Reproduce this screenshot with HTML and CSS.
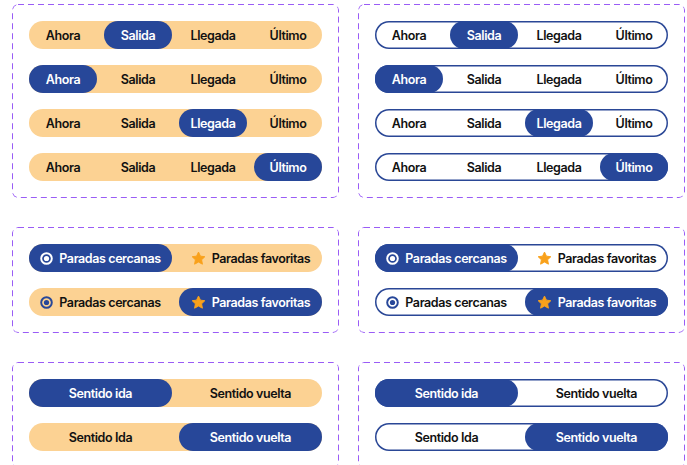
FILE: index.html
```html
<!DOCTYPE html>
<html lang="es">
<head>
  <meta charset="UTF-8" />
  <meta name="viewport" content="width=device-width, initial-scale=1" />
  <title>Segmented controls</title>
  <link rel="stylesheet" href="styles.css">
</head>
<body>

  <div class="board">

    <!-- Tabs: filled -->
    <div class="set">
      <div class="pill">
        <span class="seg">Ahora</span>
        <span class="seg active">Salida</span>
        <span class="seg">Llegada</span>
        <span class="seg">Último</span>
      </div>
      <div class="pill">
        <span class="seg active">Ahora</span>
        <span class="seg">Salida</span>
        <span class="seg">Llegada</span>
        <span class="seg">Último</span>
      </div>
      <div class="pill">
        <span class="seg">Ahora</span>
        <span class="seg">Salida</span>
        <span class="seg active">Llegada</span>
        <span class="seg">Último</span>
      </div>
      <div class="pill">
        <span class="seg">Ahora</span>
        <span class="seg">Salida</span>
        <span class="seg">Llegada</span>
        <span class="seg active">Último</span>
      </div>
    </div>

    <!-- Tabs: outlined -->
    <div class="set">
      <div class="pill outline">
        <span class="seg">Ahora</span>
        <span class="seg active">Salida</span>
        <span class="seg">Llegada</span>
        <span class="seg">Último</span>
      </div>
      <div class="pill outline">
        <span class="seg active">Ahora</span>
        <span class="seg">Salida</span>
        <span class="seg">Llegada</span>
        <span class="seg">Último</span>
      </div>
      <div class="pill outline">
        <span class="seg">Ahora</span>
        <span class="seg">Salida</span>
        <span class="seg active">Llegada</span>
        <span class="seg">Último</span>
      </div>
      <div class="pill outline">
        <span class="seg">Ahora</span>
        <span class="seg">Salida</span>
        <span class="seg">Llegada</span>
        <span class="seg active">Último</span>
      </div>
    </div>

    <!-- Paradas: filled -->
    <div class="set">
      <div class="pill half">
        <span class="seg active">
          <svg class="icon" viewBox="0 0 12 12"><circle cx="6" cy="6" r="4.9" fill="none" stroke="currentColor" stroke-width="1.8"/><circle cx="6" cy="6" r="2.4" fill="currentColor"/></svg>
          Paradas cercanas
        </span>
        <span class="seg">
          <svg class="icon star" viewBox="0 0 14 14"><path d="M7 1l1.8 3.8 4.1.55-3 2.85.75 4.1L7 10.3l-3.65 2 .75-4.1-3-2.85 4.1-.55z" fill="#f9a11b" stroke="#f9a11b" stroke-width="0.9" stroke-linejoin="round"/></svg>
          Paradas favoritas
        </span>
      </div>
      <div class="pill half">
        <span class="seg">
          <svg class="icon radio" viewBox="0 0 12 12"><circle cx="6" cy="6" r="4.9" fill="none" stroke="currentColor" stroke-width="1.8"/><circle cx="6" cy="6" r="2.4" fill="currentColor"/></svg>
          Paradas cercanas
        </span>
        <span class="seg active">
          <svg class="icon star" viewBox="0 0 14 14"><path d="M7 1l1.8 3.8 4.1.55-3 2.85.75 4.1L7 10.3l-3.65 2 .75-4.1-3-2.85 4.1-.55z" fill="#f9a11b" stroke="#f9a11b" stroke-width="0.9" stroke-linejoin="round"/></svg>
          Paradas favoritas
        </span>
      </div>
    </div>

    <!-- Paradas: outlined -->
    <div class="set">
      <div class="pill half outline">
        <span class="seg active">
          <svg class="icon" viewBox="0 0 12 12"><circle cx="6" cy="6" r="4.9" fill="none" stroke="currentColor" stroke-width="1.8"/><circle cx="6" cy="6" r="2.4" fill="currentColor"/></svg>
          Paradas cercanas
        </span>
        <span class="seg">
          <svg class="icon star" viewBox="0 0 14 14"><path d="M7 1l1.8 3.8 4.1.55-3 2.85.75 4.1L7 10.3l-3.65 2 .75-4.1-3-2.85 4.1-.55z" fill="#f9a11b" stroke="#f9a11b" stroke-width="0.9" stroke-linejoin="round"/></svg>
          Paradas favoritas
        </span>
      </div>
      <div class="pill half outline">
        <span class="seg">
          <svg class="icon radio" viewBox="0 0 12 12"><circle cx="6" cy="6" r="4.9" fill="none" stroke="currentColor" stroke-width="1.8"/><circle cx="6" cy="6" r="2.4" fill="currentColor"/></svg>
          Paradas cercanas
        </span>
        <span class="seg active">
          <svg class="icon star" viewBox="0 0 14 14"><path d="M7 1l1.8 3.8 4.1.55-3 2.85.75 4.1L7 10.3l-3.65 2 .75-4.1-3-2.85 4.1-.55z" fill="#f9a11b" stroke="#f9a11b" stroke-width="0.9" stroke-linejoin="round"/></svg>
          Paradas favoritas
        </span>
      </div>
    </div>

    <!-- Sentido: filled -->
    <div class="set">
      <div class="pill half">
        <span class="seg active">Sentido ida</span>
        <span class="seg">Sentido vuelta</span>
      </div>
      <div class="pill half">
        <span class="seg">Sentido Ida</span>
        <span class="seg active">Sentido vuelta</span>
      </div>
    </div>

    <!-- Sentido: outlined -->
    <div class="set">
      <div class="pill half outline">
        <span class="seg active">Sentido ida</span>
        <span class="seg">Sentido vuelta</span>
      </div>
      <div class="pill half outline">
        <span class="seg">Sentido Ida</span>
        <span class="seg active">Sentido vuelta</span>
      </div>
    </div>

  </div>

</body>
</html>
```

FILE: styles.css
```css
body {
  margin: 0;
  padding: 4px 0 0 12px;
  font-family: 'Inter', 'Liberation Sans', sans-serif;
  font-size: 12.5px;
  font-weight: 600;
  letter-spacing: -0.4px;
  color: #111;
  background-color: #fff;
}

.board {
  display: grid;
  grid-template-columns: 327px 327px;
  column-gap: 19px;
  row-gap: 29px;
}

.set {
  display: flex;
  flex-direction: column;
  gap: 16px;
  padding: 17px 17px;
  border-radius: 6px;
  background-image: url("data:image/svg+xml,%3Csvg xmlns='http://www.w3.org/2000/svg' width='100%25' height='100%25'%3E%3Crect x='0.5' y='0.5' width='calc(100%25 - 1px)' height='calc(100%25 - 1px)' rx='5.5' fill='none' stroke='%239a5cf6' stroke-width='1' stroke-dasharray='6 4'/%3E%3C/svg%3E");
}

.pill {
  display: flex;
  justify-content: space-between;
  height: 28px;
  border-radius: 14px;
  background-color: #fcd293;
}

.pill.outline {
  background-color: #fff;
  box-shadow: inset 0 0 0 1.5px #2a4796;
}

.seg {
  display: flex;
  align-items: center;
  justify-content: center;
  gap: 6px;
  width: 68px;
  border-radius: 14px;
  white-space: nowrap;
}

.half .seg {
  width: 143px;
}

.seg.active {
  background-color: #274799;
  color: #fff;
}

.icon {
  width: 13px;
  height: 13px;
  flex: none;
}

.icon.star {
  width: 15px;
  height: 15px;
}

.radio {
  color: #274799;
}
```
